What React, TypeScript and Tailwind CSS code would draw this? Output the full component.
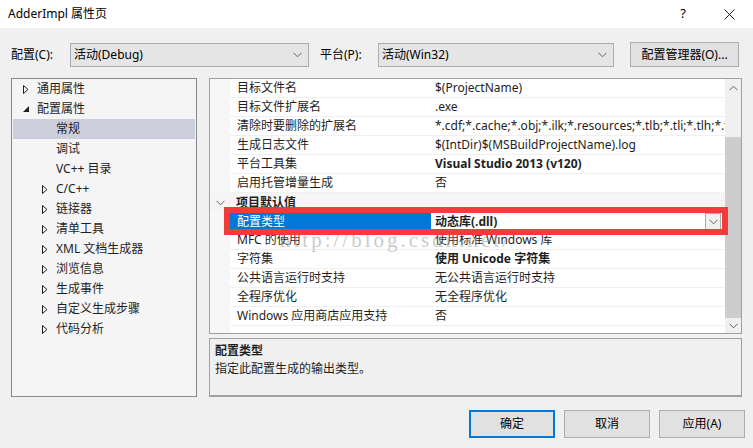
import React from "react";

const FONT = "font-['Noto_Sans','Noto_Sans_CJK_SC',sans-serif]";

function Chevron({ className = "" }: { className?: string }) {
  return (
    <svg width="9" height="6" viewBox="0 0 9 6" className={className}>
      <path d="M0.5 0.8 L4.5 4.8 L8.5 0.8" fill="none" stroke="#606060" strokeWidth="1" />
    </svg>
  );
}

function Collapsed() {
  return (
    <svg width="6" height="9" viewBox="0 0 6 9">
      <path d="M0.5 0.5 L5 4.5 L0.5 8.5 Z" fill="none" stroke="#1e1e1e" strokeWidth="1" />
    </svg>
  );
}

function Expanded() {
  return (
    <svg width="6" height="6" viewBox="0 0 6 6">
      <path d="M6 0 L6 6 L0 6 Z" fill="#1e1e1e" />
    </svg>
  );
}

type TreeItem = { label: string; level: 1 | 2; arrow?: "open" | "closed"; selected?: boolean };

const tree: TreeItem[] = [
  { label: "通用属性", level: 1, arrow: "closed" },
  { label: "配置属性", level: 1, arrow: "open" },
  { label: "常规", level: 2, selected: true },
  { label: "调试", level: 2 },
  { label: "VC++ 目录", level: 2 },
  { label: "C/C++", level: 2, arrow: "closed" },
  { label: "链接器", level: 2, arrow: "closed" },
  { label: "清单工具", level: 2, arrow: "closed" },
  { label: "XML 文档生成器", level: 2, arrow: "closed" },
  { label: "浏览信息", level: 2, arrow: "closed" },
  { label: "生成事件", level: 2, arrow: "closed" },
  { label: "自定义生成步骤", level: 2, arrow: "closed" },
  { label: "代码分析", level: 2, arrow: "closed" },
];

type Prop = { name: string; value: string; bold?: boolean };

const general: Prop[] = [
  { name: "目标文件名", value: "$(ProjectName)" },
  { name: "目标文件扩展名", value: ".exe" },
  { name: "清除时要删除的扩展名", value: "*.cdf;*.cache;*.obj;*.ilk;*.resources;*.tlb;*.tli;*.tlh;*.tmp;*.rsp" },
  { name: "生成日志文件", value: "$(IntDir)$(MSBuildProjectName).log" },
  { name: "平台工具集", value: "Visual Studio 2013 (v120)", bold: true },
  { name: "启用托管增量生成", value: "否" },
];

const defaults: Prop[] = [
  { name: "MFC 的使用", value: "使用标准 Windows 库" },
  { name: "字符集", value: "使用 Unicode 字符集", bold: true },
  { name: "公共语言运行时支持", value: "无公共语言运行时支持" },
  { name: "全程序优化", value: "无全程序优化" },
  { name: "Windows 应用商店应用支持", value: "否" },
];

function PropRow({ p }: { p: Prop }) {
  return (
    <div className="flex h-[19px] shrink-0">
      <div className="w-[20px] bg-[#f7f7f7]" />
      <div className="flex w-[201px] items-center border-b border-[#f0f0f0] pl-[7px] text-[#1e1e1e]">{p.name}</div>
      <div
        className={`flex w-[294px] items-center overflow-hidden whitespace-nowrap border-b border-[#f0f0f0] pl-[4px] text-[#1e1e1e] ${
          p.bold ? "font-bold" : ""
        }`}
      >
        {p.value}
      </div>
    </div>
  );
}

function Dropdown({ text, w }: { text: string; w: string }) {
  return (
    <div className={`${w} flex h-[24px] items-center justify-between border border-[#acacac] bg-[#e5e5e5] pl-[3px] pr-[6px]`}>
      <span>{text}</span>
      <Chevron />
    </div>
  );
}

export default function App() {
  return (
    <div className={`${FONT} flex h-[448px] w-[753px] flex-col overflow-hidden bg-[#f0f0f0] text-[12px] text-black`}>
      {/* Title bar */}
      <div className="flex h-[28px] shrink-0 items-center bg-white pl-[8px]">
        <span className="text-[12px]">AdderImpl 属性页</span>
        <span className="ml-auto mr-[38px] text-[13px]">?</span>
        <svg width="11" height="11" viewBox="0 0 11 11" className="mr-[18px]">
          <path d="M0.5 0.5 L10.5 10.5 M10.5 0.5 L0.5 10.5" stroke="#1e1e1e" strokeWidth="1" />
        </svg>
      </div>

      {/* Configuration row */}
      <div className="flex h-[50px] shrink-0 items-start pt-[14px]">
        <span className="ml-[11px] mt-[4px] w-[59px]">配置(C):</span>
        <div className="mt-[1px]">
          <Dropdown text="活动(Debug)" w="w-[239px]" />
        </div>
        <span className="ml-[11px] mt-[4px] w-[58px]">平台(P):</span>
        <div className="mt-[1px]">
          <Dropdown text="活动(Win32)" w="w-[236px]" />
        </div>
        <div className="ml-[16px] flex h-[25px] w-[109px] items-center justify-center border border-[#adadad] bg-[#e1e1e1]">
          配置管理器(O)...
        </div>
      </div>

      {/* Main */}
      <div className="flex h-[319px] shrink-0 gap-[12px] px-[11px]">
        {/* Tree */}
        <div className="w-[186px] border border-[#828790] bg-[#f5f5f5]">
          {tree.map((t) => (
            <div
              key={t.label}
              className={`mx-[1px] flex h-[20px] items-center text-[#1e1e1e] ${t.selected ? "bg-[#cccedb]" : ""} ${
                t.level === 1 ? "pl-[10px]" : "pl-[29px]"
              }`}
            >
              <span className="flex w-[14px] items-center">
                {t.arrow === "closed" && <Collapsed />}
                {t.arrow === "open" && <Expanded />}
              </span>
              <span>{t.label}</span>
            </div>
          ))}
        </div>

        {/* Right */}
        <div className="flex w-[533px] flex-col gap-[4px]">
          <div className="relative flex h-[256px] border border-[#a0a0a0] bg-white">
            <div className="flex flex-1 flex-col">
              {general.map((p) => (
                <PropRow key={p.name} p={p} />
              ))}
              <div className="flex h-[19px] shrink-0 items-center bg-[#f5f5f5] font-bold text-[#1e1e1e]">
                <span className="flex w-[20px] justify-center">
                  <Chevron />
                </span>
                <span className="pl-[6px]">项目默认值</span>
              </div>
              <div className="flex h-[19px] shrink-0">
                <div className="w-[20px] bg-[#f7f7f7]" />
                <div className="flex w-[201px] items-center bg-[#0078d7] pl-[7px] text-white">配置类型</div>
                <div className="flex w-[294px] items-center justify-between pl-[4px] pr-[4px] font-bold text-[#1e1e1e]">
                  <span>动态库(.dll)</span>
                  <span className="flex h-[17px] w-[16px] items-center justify-center border border-[#adadad] bg-[#f0f0f0]">
                    <Chevron />
                  </span>
                </div>
              </div>
              {defaults.map((p) => (
                <PropRow key={p.name} p={p} />
              ))}
              <div className="flex flex-1">
                <div className="w-[20px] bg-[#f7f7f7]" />
              </div>
            </div>

            {/* Scrollbar */}
            <div className="flex w-[16px] flex-col bg-[#f0f0f0]">
              <div className="flex h-[17px] items-center justify-center">
                <Chevron className="rotate-180" />
              </div>
              <div className="h-[41px]" />
              <div className="h-[181px] bg-[#cdcdcd]" />
              <div className="flex flex-1 items-center justify-center">
                <Chevron />
              </div>
            </div>

            {/* Watermark */}
            <span className="pointer-events-none absolute left-[70px] top-[146px] font-['Liberation_Serif',serif] text-[21px] tracking-[3px] text-[rgba(150,150,150,0.5)]">
              http://blog.csdn.net/
            </span>

            {/* Red annotation box */}
            <div className="pointer-events-none absolute left-[14px] top-[128px] h-[28px] w-[504px] border-[6px] border-[#f43a3a]" />
          </div>

          {/* Description */}
          <div className="h-[59px] border border-b-2 border-[#a0a0a0] px-[5px] pt-[3px] text-[#1e1e1e]">
            <div className="font-bold leading-[18px]">配置类型</div>
            <div className="leading-[18px]">指定此配置生成的输出类型。</div>
          </div>
        </div>
      </div>

      {/* Buttons */}
      <div className="mt-[13px] flex justify-end gap-[9px] pr-[8px]">
        <div className="flex h-[28px] w-[86px] items-center justify-center border-2 border-[#0078d7] bg-[#e1e1e1]">确定</div>
        <div className="flex h-[28px] w-[86px] items-center justify-center border border-[#adadad] bg-[#e1e1e1]">取消</div>
        <div className="flex h-[28px] w-[86px] items-center justify-center border border-[#adadad] bg-[#e1e1e1]">应用(A)</div>
      </div>
    </div>
  );
}
